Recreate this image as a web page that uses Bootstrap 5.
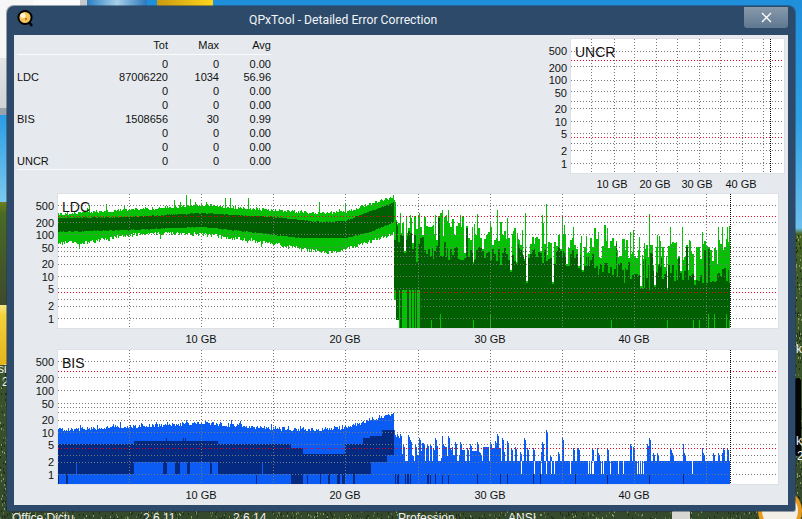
<!DOCTYPE html>
<html lang="en">
<head>
<meta charset="utf-8">
<title>QPxTool - Detailed Error Correction</title>
<link href="https://cdn.jsdelivr.net/npm/bootstrap@5.3.0/dist/css/bootstrap.min.css" rel="stylesheet">
<style>
html,body{margin:0;padding:0;width:802px;height:519px;overflow:hidden;}
body{font-family:"Liberation Sans",Arial,sans-serif;font-size:11px;color:#111;background:#2f4a22;}
.desk{position:relative;width:802px;height:519px;overflow:hidden;background:linear-gradient(180deg,#1f8fdc 0,#2ea0e4 120px,#6cc0ee 228px,#46631f 234px,#3d5a2a 280px,#35492c 519px);}
.desk-noise{position:absolute;left:0;top:0;}
.dk{position:absolute;}
.dk-white{left:0;top:0;width:33px;height:58px;background:#f6f6f6;}
.dk-paper{left:33px;top:0;width:47px;height:6px;background:#fbfbfb;}
.dk-grey{left:80px;top:0;width:7px;height:6px;background:#c6c9cc;}
.dk-glass{left:87px;top:0;width:60px;height:6px;background:linear-gradient(90deg,#2c7fc4,#a8cfe8,#2b78bb);}
.dk-gold{left:157px;top:0;width:56px;height:6px;background:linear-gradient(90deg,#c99a12,#ffd51a);}
.dk-lgrey{left:0;top:58px;width:8px;height:50px;background:linear-gradient(180deg,#e2e4e6,#d0d3d6);}
.dk-bar{left:0;top:108px;width:8px;height:7px;background:#9aa3ab;}
.dk-sky{left:0;top:115px;width:8px;height:87px;background:linear-gradient(180deg,#2a9de6,#7cc8ee);}
.dk-grass{left:0;top:202px;width:8px;height:103px;background:linear-gradient(180deg,#6b7f1c 0,#4a6a25 12px,#3d4a2c 100%);}
.dk-folder{left:0;top:305px;width:8px;height:60px;background:linear-gradient(180deg,#f6e68a 0,#f3d23a 10px,#e5b41b 100%);}
.dk-orange{left:758px;top:489px;width:44px;height:44px;border-radius:50%;border:4px solid #e89a1c;background:#f1efe6;}
.dk-dark{left:795px;top:378px;width:6px;height:78px;background:#050505;border-radius:3px;}
.dk-cursor{left:672px;top:508px;width:18px;height:11px;background:#d8d6d2;border-radius:40% 0 0 0;}
.dtxt{position:absolute;color:#f2f2f2;font-size:12px;line-height:14px;white-space:nowrap;}
.t-a{left:12px;top:511px;}.t-b{left:143px;top:511px;}.t-c{left:233px;top:511px;}.t-d{left:398px;top:511px;}.t-e{left:508px;top:511px;}
.t-f{left:-2px;top:362px;}.t-g{left:2px;top:375px;}.t-h{left:796px;top:342px;}.t-i{left:796px;top:434px;}.t-j{left:797px;top:449px;}
.qwin{position:absolute;left:7px;top:6px;width:788px;height:505px;background:#2d4a6a;border-radius:7px 7px 2px 2px;box-shadow:0 0 0 1px rgba(30,50,75,.45);padding:0 7px 6px 7px;}
.qtitle{height:29px;color:#f2f5f8;}
.qicon{width:16px;height:18px;margin:3px 0 0 3px;flex:none;}
.qtext{font-family:Roboto,"Liberation Sans",sans-serif;font-size:12.2px;line-height:29px;margin-left:216px;white-space:nowrap;}
.qclose{width:44px;height:21px;margin:1px 0 0 auto;background:linear-gradient(180deg,#8899ab,#5f7890);border-radius:0 0 3px 3px;color:#fff;}
.qbody{height:470px;background:#e6eaee;}
.qtop{height:159px;padding:4px 4px 0 3px;}
.stats{width:254px;margin:0;font-size:11px;line-height:12px;color:#111;--bs-table-bg:transparent;border-collapse:collapse;table-layout:fixed;}
.stats th,.stats td{padding:0;border:0;height:14px;font-weight:400;text-align:right;box-shadow:none;background:transparent;}
.stats thead th{border-bottom:1px solid #fbfcfc;height:15px;vertical-align:top;}
.stats tbody tr:first-child td{padding-top:3px;height:17px;}
.stats tbody tr:last-child td{border-bottom:1px solid #fbfcfc;height:14px;vertical-align:top;}
.stats .rowlab{text-align:left;}
.c-l{width:50px;}.c-t{width:101px;}.c-m{width:51px;}.c-a{width:52px;}
.yaxis{position:relative;width:44px;height:134px;flex:none;}
.ytick{position:absolute;right:4px;font-size:11px;line-height:12px;color:#111;}
.plot{position:relative;background:#fff;height:134px;flex:none;box-shadow:0 0 0 1px #dde1e6;}
.plot svg{display:block;}
.w720{width:720px;}.w213{width:213px;}
.ptitle{position:absolute;left:4px;top:5px;font-size:14px;line-height:16px;color:#111;}
.xaxis{position:relative;height:22px;}
.xtick{position:absolute;top:5px;width:50px;text-align:center;font-size:11px;line-height:12px;color:#111;}
.h21{height:21px;}
</style>
</head>
<body>
<div class="desk">
  <svg class="desk-noise" id="noise" width="802" height="519"></svg>
  <div class="dk dk-white"></div><div class="dk dk-paper"></div><div class="dk dk-grey"></div><div class="dk dk-glass"></div><div class="dk dk-gold"></div>
  <div class="dk dk-lgrey"></div><div class="dk dk-bar"></div><div class="dk dk-sky"></div><div class="dk dk-grass"></div><div class="dk dk-folder"></div>
  <div class="dk dk-orange"></div><div class="dk dk-dark"></div><div class="dk dk-cursor"></div>
  <span class="dtxt t-a">Office Dictu</span><span class="dtxt t-c">2.6.14</span><span class="dtxt t-b">2.6.11</span><span class="dtxt t-d">Profession</span><span class="dtxt t-e">ANSI</span>
  <span class="dtxt t-f">si</span><span class="dtxt t-g">2</span><span class="dtxt t-h">k</span><span class="dtxt t-i">k</span><span class="dtxt t-j">2</span>

  <div class="qwin d-flex flex-column">
    <div class="qtitle d-flex align-items-start">
      <svg class="qicon" viewBox="0 0 16 18">
        <path d="M12 13l3 4" stroke="#000" stroke-width="2.4" fill="none"/>
        <circle cx="8" cy="8.5" r="6.6" fill="#f4c65a" stroke="#000" stroke-width="2"/>
        <circle cx="6" cy="6.5" r="2.6" fill="#fdf3d2"/>
        <circle cx="9" cy="10" r="1.2" fill="#c9762a"/>
      </svg>
      <span class="qtext">QPxTool - Detailed Error Correction</span>
      <div class="qclose d-flex align-items-center justify-content-center">
        <svg width="11" height="11" viewBox="0 0 11 11"><path d="M1 1l9 9M10 1l-9 9" stroke="#fff" stroke-width="1.3" fill="none"/></svg>
      </div>
    </div>
    <div class="qbody d-flex flex-column">
      <div class="qtop d-flex justify-content-between align-items-start">
        <table class="table stats">
          <colgroup><col class="c-l"><col class="c-t"><col class="c-m"><col class="c-a"></colgroup>
          <thead><tr><th class="rowlab"></th><th>Tot</th><th>Max</th><th>Avg</th></tr></thead>
          <tbody>
            <tr><td class="rowlab"></td><td>0</td><td>0</td><td>0.00</td></tr>
            <tr><td class="rowlab">LDC</td><td>87006220</td><td>1034</td><td>56.96</td></tr>
            <tr><td class="rowlab"></td><td>0</td><td>0</td><td>0.00</td></tr>
            <tr><td class="rowlab"></td><td>0</td><td>0</td><td>0.00</td></tr>
            <tr><td class="rowlab">BIS</td><td>1508656</td><td>30</td><td>0.99</td></tr>
            <tr><td class="rowlab"></td><td>0</td><td>0</td><td>0.00</td></tr>
            <tr><td class="rowlab"></td><td>0</td><td>0</td><td>0.00</td></tr>
            <tr><td class="rowlab">UNCR</td><td>0</td><td>0</td><td>0.00</td></tr>
          </tbody>
        </table>
        <div>
          <div class="d-flex">
            <div class="yaxis" data-yaxis></div>
            <div class="plot w213"><svg id="puncr" width="213" height="134"></svg><span class="ptitle">UNCR</span></div>
          </div>
          <div class="xaxis h21" id="xuncr"></div>
        </div>
      </div>
      <div>
        <div class="d-flex">
          <div class="yaxis" data-yaxis></div>
          <div class="plot w720"><svg id="pldc" width="720" height="134"></svg><span class="ptitle">LDC</span></div>
        </div>
        <div class="xaxis" id="xldc"></div>
        <div class="d-flex">
          <div class="yaxis" data-yaxis></div>
          <div class="plot w720"><svg id="pbis" width="720" height="134"></svg><span class="ptitle">BIS</span></div>
        </div>
        <div class="xaxis h21" id="xbis"></div>
      </div>
    </div>
  </div>
</div>
<script>
(function(){
  var seed=12345;
  function rnd(){seed=(seed*16807)%2147483647;return (seed-1)/2147483646;}
  function interp(pts,x){
    for(var i=1;i<pts.length;i++){if(x<=pts[i][0]){var a=pts[i-1],b=pts[i];return a[1]+(b[1]-a[1])*(x-a[0])/(b[0]-a[0]);}}
    return pts[pts.length-1][1];
  }
  function Plot(id,ox,oy){this.s=document.getElementById(id);this.ox=ox;this.oy=oy;this.buf=[];}
  Plot.prototype.bar=function(x,y1,y2,c,w){ if(y2<=y1)return;
    this.buf.push('<rect x="'+(x-this.ox)+'" y="'+(y1-this.oy)+'" width="'+(w||1)+'" height="'+(y2-y1)+'" fill="'+c+'"/>');};
  Plot.prototype.flush=function(){this.s.setAttribute('shape-rendering','crispEdges');this.s.innerHTML=this.buf.join('');};
  function dots(p,x,y,n,dx,dy,c,step){for(var i=0;i<n;i+=step){p.buf.push('<rect x="'+(x+dx*i)+'" y="'+(y+dy*i)+'" width="1" height="1" fill="'+c+'"/>');}}
  function grid(p,w,hs,reds,vs,black){
    hs.forEach(function(o){dots(p,0,o,w,1,0,'#777',3);});
    vs.forEach(function(o){dots(p,o,0,134,0,1,'#777',3);});
    reds.forEach(function(o){dots(p,0,o,w,1,0,'#f0001c',3);});
    dots(p,black,0,134,0,1,'#000',2);
  }
  var HS=[11,28,40,53,57,62,70,82,94,105,112,124], REDS=[22,98];
  var HB=[11,27,40,53,57,62,70,82,94,105,112,124];
  var VS=[71,143,215,287,360,432,504,576,648], BL=672;

  /* LDC */
  var L=new Plot('pldc',58,194), LG='#06c006', DG='#005f00';
  var upT=[[58,214],[129,210],[201,205],[273,210],[320,213],[345,212],[365,205],[392,197],[394,196]];
  var upB=[[58,243],[90,242],[129,235],[165,233],[201,234],[250,240],[300,249],[330,253],[345,250],[365,243],[392,235],[394,232]];
  var dkT=[[58,218],[129,217],[201,213],[273,217],[320,222],[345,221],[365,213],[392,203],[394,202]];
  var dkB=[[58,232],[129,230],[201,227],[250,232],[300,238],[345,238],[370,232],[392,223],[394,222]];
  for(var x=58;x<394;x++){
    var t=interp(upT,x)+rnd()*3-1.5, b=interp(upB,x)+rnd()*4-2;
    if(rnd()<.03)t-=rnd()*8; if(rnd()<.03)b+=rnd()*6;
    L.bar(x,Math.round(t),Math.round(b),LG);
    L.bar(x,Math.round(interp(dkT,x)+rnd()-.5),Math.round(interp(dkB,x)+rnd()-.5),DG);
  }
  [[186,195],[248,198],[106,204],[319,202],[345,203]].forEach(function(s){L.bar(s[0],s[1],215,LG);});
  var lsp={};
  [[60,85],[90,90],[118,85],[165,90],[185,75],[205,75],[240,90],[290,88],[330,110],[352,75],[380,100],[435,85],[485,90],[498,58],[547,95],[580,125],[655,140],[680,130],[750,140],[760,135],[808,88],[830,150],[870,125],[905,125],[965,140],[1015,125],[1025,125],[1040,125]]
    .forEach(function(s){var k=380+Math.round(s[0]/3),v=185+Math.round(s[1]/3);lsp[k]=v;});
  var lBase=[[394,226],[430,226],[470,232],[510,236],[560,240],[600,247],[650,250],[700,250],[730,248]];
  var top=250,dt=270;
  for(x=394;x<730;x++){
    if((x%2)==0||rnd()<.2){
      top=interp(lBase,x)+(rnd()-.5)*20;
      var r=rnd(); if(r<.2)top-=rnd()*16; else if(r<.4)top+=rnd()*36;
      if(top<212)top=212+rnd()*8;
      dt=(x<430?interp([[394,234],[430,248]],x):interp([[430,250],[560,258],[610,270],[730,276]],x))+(rnd()-.5)*18;
      var q=rnd(); if(q<.2)dt-=rnd()*30; else if(q<.27)dt+=rnd()*16;
    }
    var tp=lsp[x]||Math.round(top), bot=328;
    if(x<396){bot=300;tp=198+Math.round(rnd()*6);}
    if(x>=396&&x<399)bot=320;
    L.bar(x,tp,bot,LG);
    var d=Math.max(Math.round(dt),tp+2);
    if(x>=396&&x<420){
      L.bar(x,d,290,DG);
      if(rnd()<.5)L.bar(x,290,bot,DG);
    } else if(x<396){ L.bar(x,d,290,DG);
    } else {
      L.bar(x,d,328,DG);
    }
  }
  [431,440,473,490,611,667,693,699,708,714,726,729].forEach(function(v){L.bar(v,v%2?320:314,328,LG);});
  grid(L,720,HS,REDS,VS,BL); L.flush();

  /* BIS */
  var B=new Plot('pbis',58,350), LB='#0a5cf5', DB='#032a80';
  var bT=[[58,430],[100,428],[201,423],[300,430],[345,428],[370,420],[392,414],[394,413]];
  function zx(z){return Math.round(z/3);}
  var dTop=[[174,402,444],[402,654,441],[654,873,444],[873,910,448],[910,1035,454],[1035,1090,444],[1090,1110,438],[1110,1145,436],[1145,1183,430]];
  var dBot=[[174,402,474],[402,490,462],[490,500,474],[500,525,462],[525,540,474],[540,560,462],[560,570,474],[570,630,462],[630,636,474],[636,654,462],[654,1090,474],[1090,1112,474],[1112,1145,462],[1145,1160,462],[1160,1183,455]];
  function look(list,x){for(var i=0;i<list.length;i++){if(x>=zx(list[i][0])&&x<zx(list[i][1]))return list[i][2];}return 0;}
  var rowDark=[[174,178],[198,204],[768,771],[873,908],[920,925],[960,963],[985,990],[1010,1020],[1025,1035],[1060,1064]];
  for(x=58;x<394;x++){
    t=Math.round(interp(bT,x)+rnd()*4-2-(rnd()<.1?rnd()*4:0));
    B.bar(x,t,484,LB);
    var dt2=look(dTop,x), db=look(dBot,x);
    if(dt2&&db)B.bar(x,dt2,db,DB);
    if(x>=zx(490)&&x<=zx(570)&&rnd()<.1)B.bar(x,438,441,DB);
    rowDark.forEach(function(q){if(x>=zx(q[0])&&x<zx(q[1]))B.bar(x,474,484,DB);});
  }
  B.bar(76,462,474,LB);B.bar(262,462,474,LB);
  var sp=[[45,270],[50,268],[55,272],[60,268],[70,300],[85,270],[90,285],[105,300],[118,280],[125,295],[130,295],[140,296],[150,296],[158,310],[165,280],[187,272],[190,296],[205,272],[210,310],[225,290],[240,290],[260,310],[270,296],[290,290],[300,325],[330,290],[345,288],[352,268],[365,280],[380,288],[392,310],[405,305],[420,320],[433,280],[440,310],[460,310],[485,290],[498,255],[510,330],[535,320],[547,280],[580,310],[590,310],[595,310],[635,310],[650,310],[655,325],[680,310],[750,297],[760,305],[808,280],[800,297],[820,325],[830,325],[870,310],[875,325],[908,297],[912,325],[965,310],[970,325],[1000,325],[1015,325],[1025,325],[1030,310],[1040,310]];
  var spm={}; sp.forEach(function(s){var k=380+zx(s[0]),v=345+zx(s[1]);spm[k]=v;if(!spm[k+1])spm[k+1]=v+2;});
  var gaps=[424,462,482,497,512,522,570,625,630,635,640,662,670,690,715,730,772,778,784,790,937];
  var gm={}; gaps.forEach(function(g){gm[380+zx(g)]=1;});
  var th=[45,50,55,75,80,85,90,140,145,150,165,185,205,290,360,380,460,480,585,682,808,908];
  var tm={}; th.forEach(function(g){tm[380+zx(g)]=1;});
  var blk=455;
  for(x=394;x<730;x++){
    if(x%3==0)blk=rnd()<.6?446+Math.round(rnd()*12):461;
    var bt=461;
    if(spm[x])bt=spm[x];
    else if(x<505)bt=blk;
    else if(x<570&&x%3!=0&&blk<452)bt=452;
    B.bar(x,bt,484,LB);
    if(gm[x])B.bar(x,461,474,'#fff');
    if(tm[x])B.bar(x,474,484,DB);
  }
  B.bar(394,430,484,LB);
  grid(B,720,HB,[21,98],VS,BL); B.flush();

  /* UNCR */
  var U=new Plot('puncr',571,39);
  grid(U,213,[12,27,41,52,62,69,82,94,104,111,124],[21,98],[20,43,63,85,106,128,149,171,192],199); U.flush();

  /* axes */
  var labels=[[500,12],[200,29],[100,41],[50,54],[20,70],[10,83],[5,95],[2,112],[1,125]];
  document.querySelectorAll('[data-yaxis]').forEach(function(a){
    labels.forEach(function(l){var s=document.createElement('span');s.className='ytick';s.textContent=l[0];s.style.top=(l[1]-6)+'px';a.appendChild(s);});
  });
  function xt(id,arr){var a=document.getElementById(id);arr.forEach(function(v){var s=document.createElement('span');s.className='xtick';s.textContent=v[0]+' GB';s.style.left=v[1]+'px';a.appendChild(s);});}
  var base=[[10,201],[20,345],[30,490],[40,634]];
  xt('xldc',base.map(function(v){return [v[0],v[1]-14-25];}));
  xt('xbis',base.map(function(v){return [v[0],v[1]-14-25];}));
  xt('xuncr',[[10,612],[20,655],[30,697],[40,741]].map(function(v){return [v[0],v[1]-527-25];}));

  /* grass speckle */
  var n=document.getElementById('noise'),o=[];
  function speck(x0,y0,w,h,c){for(var i=0;i<c;i++){var sx=x0+rnd()*w,sy=y0+rnd()*h,v=rnd();o.push('<rect x="'+sx.toFixed(0)+'" y="'+sy.toFixed(0)+'" width="1" height="2" fill="'+(v<.5?'#1f2c18':(v<.8?'#5f7440':'#8a9a66'))+'"/>');}}
  speck(0,365,8,154,90);speck(795,234,7,285,200);speck(0,511,802,8,500);
  n.innerHTML=o.join('');
})();
</script>
</body>
</html>
